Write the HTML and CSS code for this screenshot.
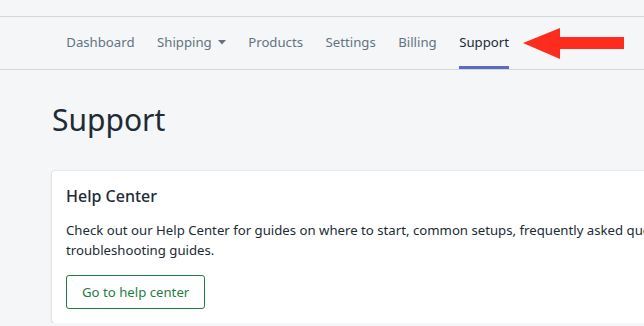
FILE: index.html
```html
<!DOCTYPE html>
<html lang="en">
<head>
    <meta charset="UTF-8">
    <meta name="viewport" content="width=device-width, initial-scale=1.0">
    <title>Support</title>
    <link rel="stylesheet" href="styles.css">
</head>
<body>
<div class="top_strip"></div>
<nav class="tabs">
    <a class="tab" href="#">Dashboard</a>
    <a class="tab" href="#">Shipping
        <svg class="caret" width="8" height="5" viewBox="0 0 8 5"><polygon points="0,0 8,0 4,4.5" fill="#637381"/></svg>
    </a>
    <a class="tab" href="#">Products</a>
    <a class="tab" href="#">Settings</a>
    <a class="tab" href="#">Billing</a>
    <a class="tab active" href="#">Support</a>
</nav>
<svg class="arrow" width="110" height="36" viewBox="518 25 110 36">
    <polygon points="523,43 560,28 560,37 624,37 624,49 560,49 560,59" fill="#fe2b1f"/>
</svg>
<main class="page">
    <h1>Support</h1>
    <section class="card">
        <h2>Help Center</h2>
        <p>Check out our Help Center for guides on where to start, common setups, frequently asked questions and troubleshooting guides.</p>
        <a class="btn" href="#">Go to help center</a>
    </section>
</main>
</body>
</html>
```

FILE: styles.css
```css
:root {
    --bg-color: #f4f6f8;
    --line-color: #d3d8dd;
    --txt-color: #212b36;
    --muted-color: #637381;
    --indigo: #5c6ac4;
    --green: #1e7e3e;
}

* {
    margin: 0;
    padding: 0;
    box-sizing: border-box;
}

body {
    background-color: var(--bg-color);
    font-family: "Noto Sans", "Open Sans", sans-serif;
    color: var(--txt-color);
    overflow: hidden;
    position: relative;
}

.top_strip {
    height: 17px;
    border-bottom: 1px solid var(--line-color);
}

.tabs {
    display: flex;
    padding-left: 55px;
    border-bottom: 1px solid var(--line-color);
}

.tab {
    display: flex;
    align-items: flex-start;
    height: 52px;
    margin: 0 11.25px;
    padding-top: 15px;
    border-bottom: 3px solid transparent;
    color: var(--muted-color);
    font-size: 13.2px;
    line-height: 20px;
    text-decoration: none;
}

.tab.active {
    color: var(--txt-color);
    border-bottom-color: var(--indigo);
}

.caret {
    margin: 8px 0 0 6px;
}

.arrow {
    position: absolute;
    left: 518px;
    top: 25px;
}

.page {
    padding: 0 0 0 52px;
}

.page h1 {
    margin: 32px 0 33px;
    font-size: 30px;
    line-height: 36px;
    font-weight: 400;
}

.card {
    width: 720px;
    background: #ffffff;
    border-radius: 3px;
    padding: 13px 14px 14px;
    box-shadow: 0 0 0 1px rgba(63, 63, 68, 0.05), 0 1px 3px rgba(63, 63, 68, 0.15);
}

.card h2 {
    font-size: 16px;
    line-height: 24px;
    font-weight: 500;
}

.card p {
    margin-top: 12px;
    font-size: 13.2px;
    line-height: 20px;
}

.btn {
    display: inline-block;
    margin-top: 15px;
    height: 34px;
    padding: 0 15px;
    border: 1px solid var(--green);
    border-radius: 3px;
    color: var(--green);
    font-size: 13.2px;
    line-height: 32px;
    text-decoration: none;
}
```
